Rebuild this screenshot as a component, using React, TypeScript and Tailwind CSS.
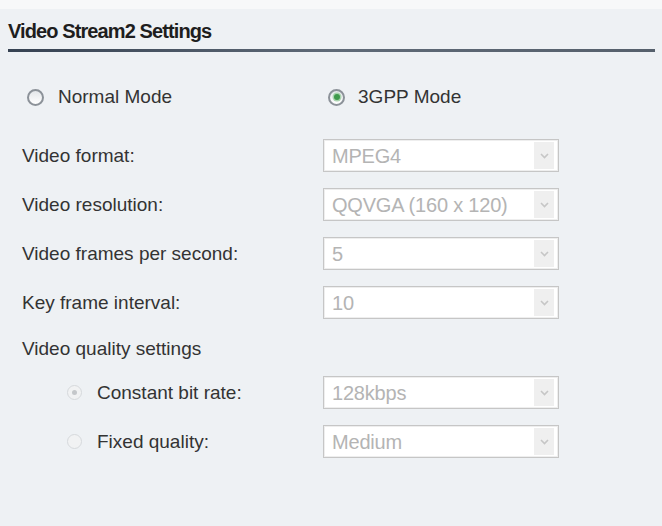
import React from 'react'

const FONT = { fontFamily: '"Liberation Sans", Arial, sans-serif' }

function Radio({ checked, disabled }: { checked?: boolean; disabled?: boolean }) {
  if (disabled) {
    return (
      <span className="flex h-[15px] w-[15px] shrink-0 items-center justify-center rounded-full border border-[#d6d9dc] bg-[#f1f2f3]">
        {checked && <span className="h-[5px] w-[5px] rounded-full bg-[#c4c7ca]" />}
      </span>
    )
  }
  return (
    <span className="flex h-[17px] w-[17px] shrink-0 items-center justify-center rounded-full border-2 border-[#8c9299] bg-gradient-to-b from-[#e4e7ea] to-[#ffffff]">
      {checked && <span className="h-[6px] w-[6px] rounded-full bg-[#3f9a4c] shadow-[0_0_0_1.5px_#a9d4ae]" />}
    </span>
  )
}

function Select({ value }: { value: string }) {
  return (
    <div className="flex h-[33px] w-[236px] items-center border border-[#c6c6c6] bg-white pl-[8px] pr-[4px] shadow-[inset_0_0_0_1px_#eeeeee]">
      <span className="flex-1 text-[20px] leading-none tracking-[-0.2px] text-[#b4b4b4]">{value}</span>
      <span className="flex h-[27px] w-[20px] items-center justify-center bg-[#efefef]">
        <svg width="9" height="6" viewBox="0 0 9 6">
          <path d="M1 1 L4.5 4.5 L8 1" fill="none" stroke="#c6c6c6" strokeWidth="1.6" />
        </svg>
      </span>
    </div>
  )
}

function Row({ label, value }: { label: string; value: string }) {
  return (
    <div className="flex h-[33px] items-center">
      <span className="w-[301px] text-[19px] leading-[24px] text-[#333]">{label}</span>
      <Select value={value} />
    </div>
  )
}

export default function App() {
  return (
    <div className="h-[526px] w-[662px] overflow-hidden bg-[#eef1f4]" style={FONT}>
      <div className="h-[9px] bg-[#f7f8f9]" />
      <div className="px-[8px] pt-[10px]">
        <div className="h-[24px] text-[20px] font-bold leading-[24px] tracking-[-0.9px] text-[#1e1e1e]">
          Video Stream2 Settings
        </div>
        <div className="mt-[6px] h-[3px] w-[647px] bg-gradient-to-r from-[#364252] via-[#5f6a77] to-[#56606c]" />
      </div>

      <div className="pl-[22px]">
        <div className="mt-[32px] flex h-[26px] items-center text-[19px] leading-[24px] text-[#333]">
          <span className="ml-[5px] flex items-center gap-[14px]">
            <Radio />
            <span>Normal Mode</span>
          </span>
          <span className="ml-[156px] flex items-center gap-[13px]">
            <Radio checked />
            <span>3GPP Mode</span>
          </span>
        </div>

        <div className="mt-[29px] flex flex-col gap-[16px]">
          <Row label="Video format:" value="MPEG4" />
          <Row label="Video resolution:" value="QQVGA (160 x 120)" />
          <Row label="Video frames per second:" value="5" />
          <Row label="Key frame interval:" value="10" />
        </div>

        <div className="mt-[18px] flex h-[24px] items-center text-[19px] leading-[24px] text-[#333]">
          Video quality settings
        </div>

        <div className="mt-[15px] flex flex-col gap-[16px]">
          <div className="flex h-[33px] items-center">
            <span className="flex w-[301px] items-center pl-[45px]">
              <Radio checked disabled />
              <span className="ml-[15px] text-[19px] leading-[24px] text-[#333]">Constant bit rate:</span>
            </span>
            <Select value="128kbps" />
          </div>
          <div className="flex h-[33px] items-center">
            <span className="flex w-[301px] items-center pl-[45px]">
              <Radio disabled />
              <span className="ml-[15px] text-[19px] leading-[24px] text-[#333]">Fixed quality:</span>
            </span>
            <Select value="Medium" />
          </div>
        </div>
      </div>
    </div>
  )
}
